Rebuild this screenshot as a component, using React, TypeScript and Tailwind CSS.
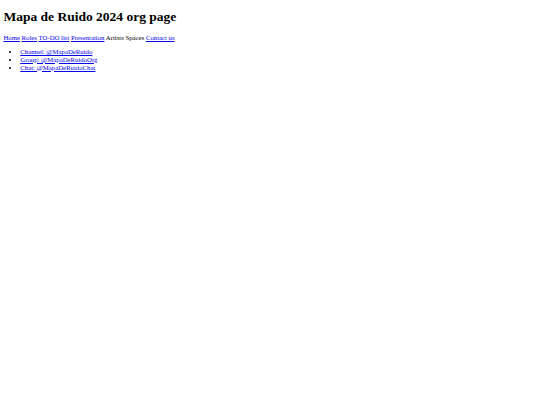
export default function App() {
    const nav = [
        { label: "Home", href: "#" },
        { label: "Roles", href: "#" },
        { label: "TO-DO list", href: "#" },
        { label: "Presentation", href: "#" },
        { label: "Artists Spaces" },
        { label: "Contact us", href: "#" },
    ];
    const links = ["Channel: @MapaDeRuido", "Group: @MapaDeRuidoOrg", "Chat: @MapaDeRuidoChat"];

    return (
        <div className="min-h-screen bg-white px-[3.4px] py-[9px] font-['Liberation_Serif',serif] text-[6.75px] leading-[1.15] text-black">
            <h1 className="mb-[9px] text-[13.5px] leading-[1.15] font-bold">Mapa de Ruido 2024 org page</h1>
            <p className="my-[6.75px]">
                {nav.map((item, i) => (
                    <span key={item.label}>
                        {item.href ? (
                            <a href={item.href} className="text-[#0000ee] underline">
                                {item.label}
                            </a>
                        ) : (
                            item.label
                        )}
                        {i < nav.length - 1 ? " " : ""}
                    </span>
                ))}
            </p>
            <ul className="my-[6.75px] list-disc pl-[16.9px]">
                {links.map((l) => (
                    <li key={l}>
                        <a href="#" className="text-[#0000ee] underline">
                            {l}
                        </a>
                    </li>
                ))}
            </ul>
        </div>
    );
}
